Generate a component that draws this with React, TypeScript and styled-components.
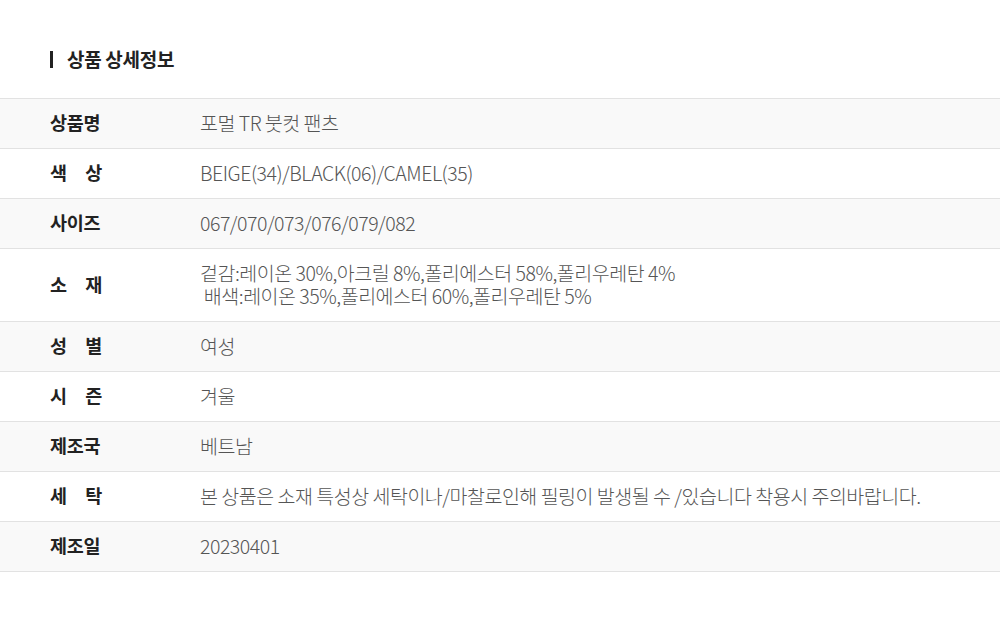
import React from 'react';
import styled, { createGlobalStyle } from 'styled-components';

const GlobalStyle = createGlobalStyle`
  body {
    margin: 0;
    background: #fff;
    font-family: 'Noto Sans CJK KR', 'Noto Sans', sans-serif;
  }
`;

const Wrapper = styled.div`
  width: 1000px;
  padding-top: 47px;
`;

const Title = styled.h2`
  display: flex;
  align-items: center;
  gap: 14px;
  margin: 0 0 27px 50px;
  font-size: 19px;
  font-weight: 700;
  color: #222;
  letter-spacing: -0.3px;
  line-height: 24px;

  &::before {
    content: '';
    width: 3px;
    height: 17px;
    background: #222;
  }
`;

const Table = styled.div`
  border-top: 1px solid #e2e2e2;
`;

const Row = styled.div<{ $gray: boolean }>`
  display: flex;
  align-items: center;
  min-height: 46px;
  padding: 0 50px 3px;
  background: ${(p) => (p.$gray ? '#f9f9f9' : '#fff')};
  border-bottom: 1px solid #e2e2e2;
`;

const Label = styled.div`
  width: 52px;
  margin-right: 98px;
  font-size: 18.5px;
  font-weight: 700;
  color: #222;
  text-align: justify;
  text-align-last: justify;
  letter-spacing: -0.3px;
  line-height: 24px;
`;

const Value = styled.div`
  flex: 1;
  padding: 12px 0 11px;
  font-size: 19.5px;
  font-weight: 300;
  color: #555;
  line-height: 23px;
  letter-spacing: -0.48px;
  white-space: pre-wrap;
`;

const rows: [string, string][] = [
  ['상품명', '포멀 TR 붓컷 팬츠'],
  ['색 상', 'BEIGE(34)/BLACK(06)/CAMEL(35)'],
  ['사이즈', '067/070/073/076/079/082'],
  ['소 재', '겉감:레이온 30%,아크릴 8%,폴리에스터 58%,폴리우레탄 4%\n 배색:레이온 35%,폴리에스터 60%,폴리우레탄 5%'],
  ['성 별', '여성'],
  ['시 즌', '겨울'],
  ['제조국', '베트남'],
  ['세 탁', '본 상품은 소재 특성상 세탁이나/마찰로인해 필링이 발생될 수 /있습니다 착용시 주의바랍니다.'],
  ['제조일', '20230401'],
];

const App: React.FC = () => {
  return (
    <>
      <GlobalStyle />
      <Wrapper>
        <Title>상품 상세정보</Title>
        <Table>
          {rows.map(([label, value], i) => (
            <Row key={label} $gray={i % 2 === 0}>
              <Label>{label}</Label>
              <Value>{value}</Value>
            </Row>
          ))}
        </Table>
      </Wrapper>
    </>
  );
};

export default App;
